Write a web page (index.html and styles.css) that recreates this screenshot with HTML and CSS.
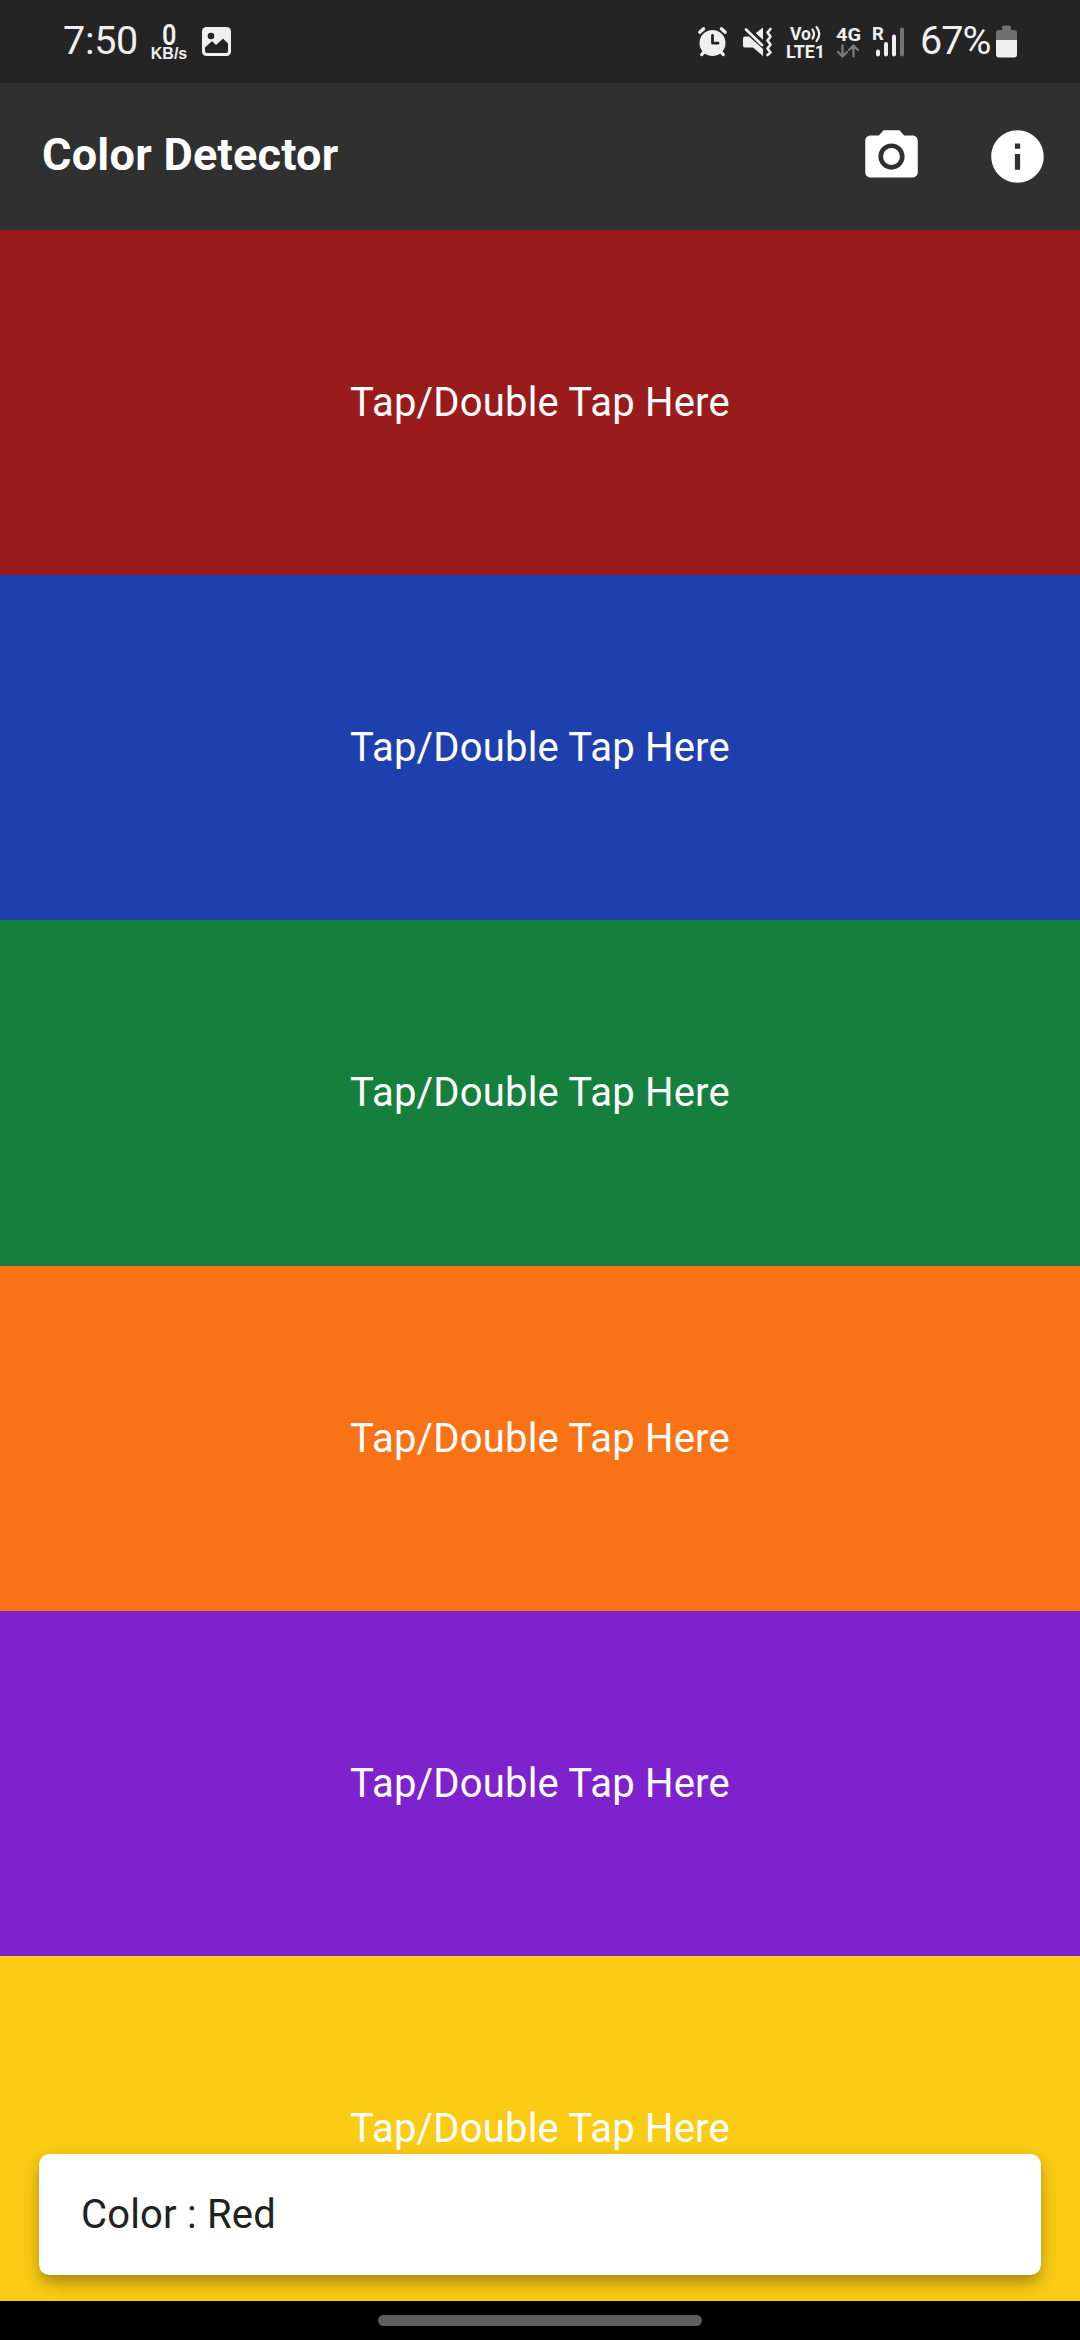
FILE: index.html
```html
<!DOCTYPE html>
<html lang="en">
<head>
<meta charset="utf-8">
<title>Color Detector</title>
<link rel="stylesheet" href="styles.css">
</head>
<body>
<div class="screen">
  <header class="status">
    <div class="status-left">
      <span class="clock">7:50</span>
      <div class="speed"><span class="speed-value">0</span><span class="speed-unit">KB/s</span></div>
      <svg class="icon-picture" width="29" height="29" viewBox="0 0 29 29">
        <rect width="29" height="29" rx="4.5" fill="#efefef"/>
        <circle cx="9" cy="9" r="3.3" fill="#242424"/>
        <path d="M3 20.5L9.5 14.5Q10 14 10.500 14.500L14 18L20.500 12Q21 11.600 21.500 12L26 16.500V24Q26 26 24 26H5Q3 26 3 24Z" fill="#242424"/>
      </svg>
    </div>
    <div class="status-right">
      <svg width="29" height="30" viewBox="0 0 29 30">
        <circle cx="14.500" cy="16" r="13" fill="#efefef"/>
        <path d="M1.800 5.200L5.600 1.800M27.200 5.200L23.400 1.800M6 25L3.800 27.500M23 25L25.200 27.500" stroke="#efefef" stroke-width="3.400" stroke-linecap="round"/>
        <path d="M14.500 8.500V16.200H20" fill="none" stroke="#242424" stroke-width="2.800" stroke-linecap="round" stroke-linejoin="round"/>
      </svg>
      <svg width="29" height="30" viewBox="0 0 29 30">
        <path d="M2 9.500H6L20 22V29L10 20.500H2Q0 20.500 0 18.500V11.500Q0 9.500 2 9.500ZM12.500 6.200L20 0.500V13Z" fill="#efefef"/>
        <path d="M6 2L21.500 16.500" stroke="#242424" stroke-width="3"/>
        <path d="M3 2.500L19 18" stroke="#efefef" stroke-width="2.600" stroke-linecap="round"/>
        <path d="M27.500 2L24.500 5.500L27.500 9.500L24.500 13.500L27.500 17.500L24.500 21.500L27.500 25.500L24.500 28" fill="none" stroke="#efefef" stroke-width="2.600" stroke-linecap="round" stroke-linejoin="round"/>
      </svg>
      <svg class="volte" width="40" height="36" viewBox="0 0 40 36">
        <text x="4" y="15.500" font-size="18" textLength="21" lengthAdjust="spacingAndGlyphs">Vo</text>
        <path d="M26.500 5.500Q29.500 10 26.500 14.500M30.500 3Q36 10 30.500 17.200" fill="none" stroke="#efefef" stroke-width="2.200" stroke-linecap="round"/>
        <text x="0" y="33.500" font-size="18.500" textLength="39" lengthAdjust="spacingAndGlyphs">LTE1</text>
      </svg>
      <svg class="data" width="26" height="36" viewBox="0 0 26 36">
        <text x="0" y="16.500" font-size="18.500" textLength="25" lengthAdjust="spacingAndGlyphs">4G</text>
        <path d="M6.500 21.500V32.500M2 28L6.500 32.500L11 28M17.500 32.500V21.500M13 26L17.500 21.500L22 26" fill="none" stroke="#7a7a7a" stroke-width="2.300" stroke-linecap="round" stroke-linejoin="round"/>
      </svg>
      <svg class="signal" width="33" height="34" viewBox="0 0 33 34">
        <text x="0" y="15" font-size="18.500">R</text>
        <path d="M6 26.500V29.500M14 19V29.500M22 11.500V29.500" stroke="#efefef" stroke-width="4" stroke-linecap="round"/>
        <path d="M30 4.500V29.500" stroke="#757575" stroke-width="4" stroke-linecap="round"/>
      </svg>
      <span class="percent">67%</span>
      <svg width="21" height="33" viewBox="0 0 21 33">
        <path d="M0 15V8Q0 5 3 5H6V2.500Q6 0.500 8 0.500H13Q15 0.500 15 2.500V5H18Q21 5 21 8V15Z" fill="#707070"/>
        <path d="M0 15H21V29.500Q21 32.500 18 32.500H3Q0 32.500 0 29.500Z" fill="#efefef"/>
      </svg>
    </div>
  </header>
  <div class="appbar">
    <h1 class="title">Color Detector</h1>
    <div class="actions">
      <svg width="63" height="63" viewBox="0 0 24 24" fill="#fff">
        <circle cx="12" cy="12" r="3.200"/>
        <path d="M9 2L7.170 4H4c-1.100 0-2 .9-2 2v12c0 1.100.9 2 2 2h16c1.100 0 2-.9 2-2V6c0-1.100-.9-2-2-2h-3.170L15 2H9zm3 15c-2.760 0-5-2.240-5-5s2.240-5 5-5 5 2.240 5 5-2.240 5-5 5z"/>
      </svg>
      <svg width="63" height="63" viewBox="0 0 24 24" fill="#fff">
        <path d="M12 2C6.480 2 2 6.480 2 12s4.480 10 10 10 10-4.480 10-10S17.520 2 12 2zm1 15h-2v-6h2v6zm0-8h-2V7h2v2z"/>
      </svg>
    </div>
  </div>
  <main class="bands">
    <div class="band red">Tap/Double Tap Here</div>
    <div class="band blue">Tap/Double Tap Here</div>
    <div class="band green">Tap/Double Tap Here</div>
    <div class="band orange">Tap/Double Tap Here</div>
    <div class="band purple">Tap/Double Tap Here</div>
    <div class="band yellow">Tap/Double Tap Here</div>
    <div class="snackbar">Color : Red</div>
  </main>
  <footer class="nav"><div class="handle"></div></footer>
</div>
</body>
</html>
```
FILE: styles.css
```css
* { box-sizing: border-box; }
body { margin: 0; font-family: Roboto, sans-serif; }
svg { display: block; flex: none; overflow: visible; }
.screen { width: 1080px; height: 2340px; display: flex; flex-direction: column; overflow: hidden; }
.status { height: 83px; flex: none; background: #242424; color: #efefef; display: flex; justify-content: space-between; padding: 0 63px 0 63px; }
.status-left, .status-right { display: flex; align-items: center; }
.clock, .percent { font-size: 39.500px; line-height: 46px; margin-top: -2px; }
.clock { width: 76px; letter-spacing: -0.300px; }
.speed { width: 38px; margin: 0 14px 0 11px; display: flex; flex-direction: column; align-items: center; }
.speed-value { font-size: 29px; font-weight: 600; line-height: 24px; transform: scaleX(0.87); }
.speed-unit { font: bold 16px/14px "Liberation Sans", sans-serif; }
.status-right { gap: 16px; }
.status-right text { font-weight: 700; fill: #efefef; }
.volte { margin-left: -2px; }
.data { margin-left: -6px; }
.signal { margin-left: -5.500px; }
.percent { width: 72px; white-space: nowrap; letter-spacing: -1px; }
.percent + svg { margin-left: -12px; }
.status-right .percent { margin-left: -1px; }
.appbar { height: 147px; flex: none; background: #303030; display: flex; align-items: center; justify-content: space-between; padding: 0 31.500px 0 42px; }
.title { margin: -3px 0 0; color: #fff; font-size: 45px; font-weight: 700; line-height: 54px; letter-spacing: 0.260px; }
.actions { display: flex; gap: 63px; }
.bands { flex: 1; min-height: 0; display: flex; flex-direction: column; position: relative; overflow: hidden; }
.band { flex: 1; display: flex; align-items: center; justify-content: center; color: #fff; font-size: 40px; letter-spacing: 0.200px; }
.red { background: #991b1b; }
.blue { background: #1e40af; }
.green { background: #15803d; }
.orange { background: #f97316; }
.purple { background: #7e22ce; }
.yellow { background: #facc15; }
.snackbar { position: absolute; left: 39.400px; right: 39.400px; bottom: 26.300px; height: 120.700px; padding-left: 41.500px; display: flex; align-items: center; background: #fff; color: #212121; border-radius: 10.500px; font-size: 40px; letter-spacing: 0.200px; box-shadow: 0 8px 13px -3px rgba(0,0,0,.2), 0 10px 20px rgba(0,0,0,.14), 0 3px 20px rgba(0,0,0,.06); }
.nav { height: 39px; flex: none; background: #000; display: flex; justify-content: center; padding-top: 14px; }
.handle { width: 324px; height: 11px; border-radius: 6px; background: #5e5e5e; }
```
